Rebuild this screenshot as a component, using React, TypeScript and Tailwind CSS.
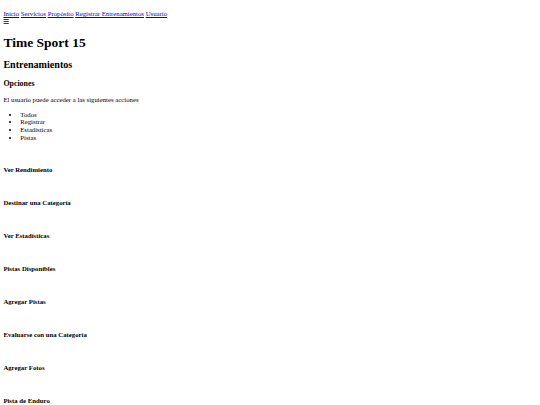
const navLinks = ['Inicio', 'Servicios', 'Propósito', 'Registrar Entrenamientos', 'Usuario'];

const opciones = ['Todos', 'Registrar', 'Estadísticas', 'Pistas'];

const acciones = [
  'Ver Rendimiento',
  'Destinar una Categoría',
  'Ver Estadísticas',
  'Pistas Disponibles',
  'Agregar Pistas',
  'Evaluarse con una Categoría',
  'Agregar Fotos',
  'Pista de Enduro',
];

export default function App() {
  return (
    <div className="min-h-[405px] bg-white p-[3.375px] text-[6.75px] text-black font-['Liberation_Serif',serif] leading-[1.15]">
      <nav className="mt-[6.75px]">
        <div>
          {navLinks.map((link, i) => (
            <span key={link}>
              <a href="#" className="text-[#0000ee] underline">
                {link}
              </a>
              {i < navLinks.length - 1 ? ' ' : ''}
            </span>
          ))}
        </div>
        <div>☰</div>
      </nav>

      <h1 className="my-[9.05px] text-[13.5px] font-bold">Time Sport 15</h1>
      <h2 className="my-[8.4px] text-[10.125px] font-bold">Entrenamientos</h2>

      <section>
        <h3 className="my-[7.9px] text-[7.9px] font-bold">Opciones</h3>
        <p className="my-[6.75px]">El usuario puede acceder a las siguientes acciones</p>
        <ul className="my-[6.75px] list-disc pl-[16.875px]">
          {opciones.map((o) => (
            <li key={o}>{o}</li>
          ))}
        </ul>
      </section>

      <div className="mt-[24.3px] flex flex-col gap-[25.2px]">
        {acciones.map((a) => (
          <h4 key={a} className="text-[6.75px] font-bold">
            {a}
          </h4>
        ))}
      </div>
    </div>
  );
}
